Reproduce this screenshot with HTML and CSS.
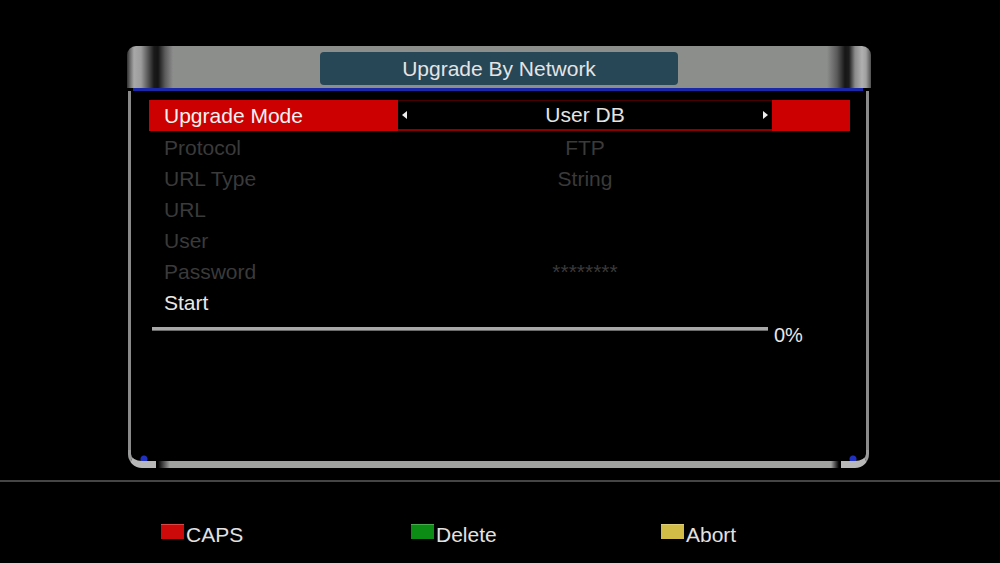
FILE: index.html
```html
<!DOCTYPE html>
<html>
<head>
<meta charset="utf-8">
<link rel="stylesheet" href="styles.css">
</head>
<body>
<div class="screen">
  <div class="panel">
    <div class="panel-top">
      <div class="title">Upgrade By Network</div>
    </div>
    <div class="blue"></div>
    <div class="panel-body">
      <div class="row sel">
        <div class="lbl">Upgrade Mode</div>
        <div class="val"><span class="arr l"></span><span class="txt">User DB</span><span class="arr r"></span></div>
        <div class="end"></div>
      </div>
      <div class="row">
        <div class="lbl">Protocol</div>
        <div class="val center"><span class="txt">FTP</span></div>
        <div class="end"></div>
      </div>
      <div class="row">
        <div class="lbl">URL Type</div>
        <div class="val center"><span class="txt">String</span></div>
        <div class="end"></div>
      </div>
      <div class="row">
        <div class="lbl">URL</div>
        <div class="val center"><span class="txt"></span></div>
        <div class="end"></div>
      </div>
      <div class="row">
        <div class="lbl">User</div>
        <div class="val center"><span class="txt"></span></div>
        <div class="end"></div>
      </div>
      <div class="row">
        <div class="lbl">Password</div>
        <div class="val center"><span class="txt pw">********</span></div>
        <div class="end"></div>
      </div>
      <div class="row active">
        <div class="lbl">Start</div>
        <div class="val center"><span class="txt"></span></div>
        <div class="end"></div>
      </div>
      <div class="progress">
        <div class="pbar"></div>
        <div class="pct">0%</div>
      </div>
    </div>
    <div class="panel-foot">
      <div class="cap-l"></div>
      <div class="bar-b"></div>
      <div class="cap-r"></div>
    </div>
  </div>
  <div class="hr"></div>
  <div class="legend">
    <div class="item"><span class="key red"></span><span>CAPS</span></div>
    <div class="item"><span class="key green"></span><span>Delete</span></div>
    <div class="item"><span class="key yellow"></span><span>Abort</span></div>
  </div>
</div>
</body>
</html>
```

FILE: styles.css
```css
html, body {
  margin: 0;
  padding: 0;
  background: #000;
}
.screen {
  width: 1000px;
  height: 563px;
  overflow: hidden;
  background: #000;
  font-family: "Liberation Sans", Arial, sans-serif;
}
.panel {
  margin: 46px 0 0 127px;
  width: 744px;
  display: flex;
  flex-direction: column;
}
.panel-top {
  height: 42px;
  border-radius: 9px 9px 0 0;
  background: linear-gradient(to right,
    #303030 0px, #6a6a6a 3px, #a8a8a8 7px, #9c9c9c 14px, #606060 20px,
    #1a1a1a 27px, #141414 31px, #5a5a5a 38px, #8c8e8c 46px,
    #8c8e8c 700px, #5a5a5a 710px, #161616 718px, #1c1c1c 722px,
    #8a8a8a 728px, #b0b0b0 735px, #a0a0a0 739px, #505050 744px);
  display: flex;
  justify-content: center;
  align-items: flex-start;
}
.title {
  margin-top: 6px;
  width: 358px;
  height: 33px;
  background: #274656;
  border-radius: 4px;
  color: #e4e4e4;
  font-size: 21px;
  line-height: 34px;
  text-align: center;
}
.blue {
  height: 3px;
  background: #1a28a8;
  margin: 0 8px 0 6px;
}
.panel-body {
  height: 359px;
  box-sizing: border-box;
  margin: 0 2px 0 1px;
  border-left: 3px solid #8a8a8a;
  border-right: 3px solid #8a8a8a;
  padding: 9px 16px 0 18px;
}
.row {
  display: flex;
  height: 31px;
  line-height: 31px;
  font-size: 21px;
  color: #3a3a3a;
}
.row.sel {
  margin-bottom: 1px;
}
.lbl {
  width: 249px;
  padding-left: 15px;
  box-sizing: border-box;
  white-space: nowrap;
}
.val {
  width: 374px;
  box-sizing: border-box;
  display: flex;
  align-items: center;
  justify-content: space-between;
  padding: 0 4px;
}
.val.center {
  justify-content: center;
}
.txt {
  line-height: normal;
}
.end {
  width: 78px;
}
.row.sel .lbl,
.row.sel .end {
  background: #cc0000;
  color: #f2f2f2;
}
.row.sel .val {
  border-top: 1px solid #4a0000;
  border-bottom: 2px solid #8c0000;
  color: #e4e4e4;
}
.row.active .lbl {
  color: #e8e8e8;
}
.arr {
  width: 0;
  height: 0;
  border-top: 4px solid transparent;
  border-bottom: 4px solid transparent;
}
.arr.l {
  border-right: 5px solid #eeeeee;
}
.arr.r {
  border-left: 5px solid #eeeeee;
}
.progress {
  display: flex;
  align-items: flex-start;
  padding-left: 3px;
}
.pbar {
  width: 616px;
  height: 3px;
  margin-top: 9px;
  background: #a8a8a8;
  border-bottom: 1px solid #6a6a6a;
}
.pct {
  margin-left: 6px;
  margin-top: 7px;
  font-size: 20px;
  line-height: 20px;
  color: #e8e8e8;
}
.panel-foot {
  display: flex;
  height: 18px;
  margin: 0 2px 0 1px;
}
.cap-l,
.cap-r {
  width: 28px;
  box-sizing: border-box;
  border-bottom: 7px solid #b8b8b8;
}
.cap-l {
  border-left: 3px solid #9a9a9a;
  border-bottom-left-radius: 14px;
  background: radial-gradient(circle at 13px 9px, #2030c0 0 3px, transparent 4px);
}
.cap-r {
  border-right: 3px solid #9a9a9a;
  border-bottom-right-radius: 14px;
  background: radial-gradient(circle at 12px 9px, #2030c0 0 3px, transparent 4px);
}
.bar-b {
  flex: 1;
  align-self: flex-end;
  height: 7px;
  background: linear-gradient(to right,
    #000 0px, #000 2px, #a0a2a0 14px,
    #a0a2a0 calc(100% - 10px), #000 calc(100% - 2px), #000 100%);
}
.hr {
  margin-top: 12px;
  height: 2px;
  background: #454545;
}
.legend {
  display: flex;
  margin-top: 42px;
  padding-left: 161px;
}
.item {
  width: 250px;
  display: flex;
  align-items: flex-start;
  font-size: 21px;
  line-height: 21px;
  color: #e2e2e2;
}
.key {
  width: 23px;
  height: 15px;
  margin-right: 2px;
  box-sizing: border-box;
  border-top: 1px solid rgba(255, 255, 255, 0.25);
}
.key.red { background: #cc0a0a; }
.key.green { background: #0c8c14; }
.key.yellow { background: #d2bc48; }
```
